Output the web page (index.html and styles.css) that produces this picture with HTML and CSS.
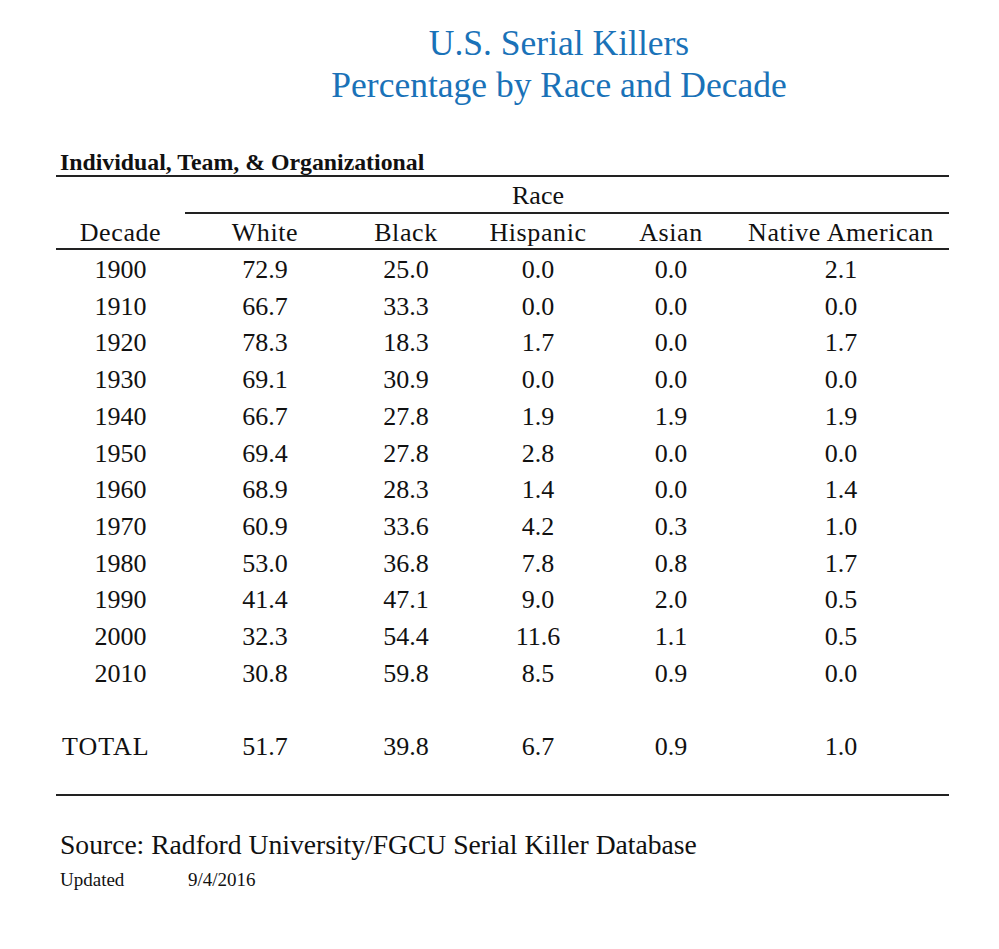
FILE: index.html
```html
<!DOCTYPE html>
<html lang="en">
<head>
<meta charset="utf-8">
<title>U.S. Serial Killers - Percentage by Race and Decade</title>
<link rel="stylesheet" href="styles.css">
</head>
<body>
<div class="page">
  <h1 class="title">U.S. Serial Killers<br>Percentage by Race and Decade</h1>
  <div class="subhead">Individual, Team, &amp; Organizational</div>
  <table class="data">
    <colgroup>
      <col class="c-decade"><col class="c-white"><col class="c-black"><col class="c-hisp"><col class="c-asian"><col class="c-native">
    </colgroup>
    <thead>
      <tr class="race-row">
        <th class="blank"></th>
        <th class="ruled"></th>
        <th class="ruled"></th>
        <th class="ruled">Race</th>
        <th class="ruled"></th>
        <th class="ruled"></th>
      </tr>
      <tr class="head-row">
        <th>Decade</th><th>White</th><th>Black</th><th>Hispanic</th><th>Asian</th><th>Native American</th>
      </tr>
    </thead>
    <tbody>
      <tr><td>1900</td><td>72.9</td><td>25.0</td><td>0.0</td><td>0.0</td><td>2.1</td></tr>
      <tr><td>1910</td><td>66.7</td><td>33.3</td><td>0.0</td><td>0.0</td><td>0.0</td></tr>
      <tr><td>1920</td><td>78.3</td><td>18.3</td><td>1.7</td><td>0.0</td><td>1.7</td></tr>
      <tr><td>1930</td><td>69.1</td><td>30.9</td><td>0.0</td><td>0.0</td><td>0.0</td></tr>
      <tr><td>1940</td><td>66.7</td><td>27.8</td><td>1.9</td><td>1.9</td><td>1.9</td></tr>
      <tr><td>1950</td><td>69.4</td><td>27.8</td><td>2.8</td><td>0.0</td><td>0.0</td></tr>
      <tr><td>1960</td><td>68.9</td><td>28.3</td><td>1.4</td><td>0.0</td><td>1.4</td></tr>
      <tr><td>1970</td><td>60.9</td><td>33.6</td><td>4.2</td><td>0.3</td><td>1.0</td></tr>
      <tr><td>1980</td><td>53.0</td><td>36.8</td><td>7.8</td><td>0.8</td><td>1.7</td></tr>
      <tr><td>1990</td><td>41.4</td><td>47.1</td><td>9.0</td><td>2.0</td><td>0.5</td></tr>
      <tr><td>2000</td><td>32.3</td><td>54.4</td><td>11.6</td><td>1.1</td><td>0.5</td></tr>
      <tr><td>2010</td><td>30.8</td><td>59.8</td><td>8.5</td><td>0.9</td><td>0.0</td></tr>
      <tr class="spacer"><td colspan="6"></td></tr>
    </tbody>
    <tfoot>
      <tr class="total-row"><td class="total-label">TOTAL</td><td>51.7</td><td>39.8</td><td>6.7</td><td>0.9</td><td>1.0</td></tr>
    </tfoot>
  </table>
  <p class="source">Source: Radford University/FGCU Serial Killer Database</p>
  <p class="updated"><span class="upd-label">Updated</span><span class="upd-date">9/4/2016</span></p>
</div>
</body>
</html>
```

FILE: styles.css
```css
html, body {
  margin: 0;
  padding: 0;
  background: #ffffff;
}

body {
  font-family: "Liberation Serif", "Times New Roman", serif;
  color: #111111;
}

.page {
  width: 893px;
  margin-left: 56px;
  padding-top: 22px;
}

.title {
  margin: 0;
  padding-left: 113px;
  text-align: center;
  font-weight: normal;
  font-size: 35.5px;
  line-height: 42px;
  color: #1a72b8;
}

.subhead {
  margin-top: 43px;
  padding-left: 4px;
  font-weight: bold;
  font-size: 23.8px;
  line-height: 26px;
  border-bottom: 2px solid #222222;
}

.data {
  width: 893px;
  border-collapse: collapse;
  table-layout: fixed;
  font-size: 26px;
}

.c-decade { width: 129px; }
.c-white { width: 160px; }
.c-black { width: 122px; }
.c-hisp { width: 142px; }
.c-asian { width: 124px; }
.c-native { width: 216px; }

.data th,
.data td {
  padding: 0;
  text-align: center;
  font-weight: normal;
  white-space: nowrap;
}

.race-row th {
  line-height: 26px;
  padding-top: 6px;
  padding-bottom: 3px;
}

.race-row th.ruled {
  border-bottom: 2px solid #222222;
}

.head-row th {
  line-height: 26px;
  padding-top: 6px;
  padding-bottom: 2px;
  letter-spacing: 0.6px;
  border-bottom: 2px solid #222222;
}

.data tbody td {
  padding-top: 3px;
  line-height: 33.7px;
}

.spacer td {
  height: 33.7px;
}

.total-row td {
  padding-top: 3px;
  line-height: 33.7px;
  padding-bottom: 30px;
  border-bottom: 2px solid #222222;
}

.total-row td.total-label {
  text-align: left;
  padding-left: 6px;
  letter-spacing: 1px;
}

.source {
  margin: 33px 0 0 0;
  padding-left: 4px;
  font-size: 27.6px;
  line-height: 32px;
}

.updated {
  margin: 7px 0 0 0;
  padding-left: 4px;
  font-size: 19px;
  line-height: 24px;
  display: flex;
}

.upd-label {
  width: 128px;
}
```
